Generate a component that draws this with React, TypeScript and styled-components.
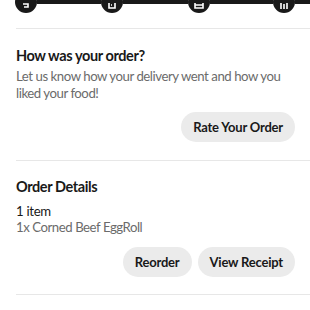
import styled, { createGlobalStyle } from 'styled-components'

const GlobalStyle = createGlobalStyle`
  body {
    margin: 0;
    background: #ffffff;
    font-family: Lato, 'Open Sans', sans-serif;
    color: #191919;
  }
`

const Page = styled.div`
  width: 310px;
  height: 310px;
  overflow: hidden;
  background: #ffffff;
`

const Tracker = styled.div`
  display: flex;
  align-items: center;
  margin-top: -9px;
  margin-bottom: 15px;
  padding-left: 15px;
  height: 22px;
`

const Step = styled.div`
  flex: none;
  width: 22px;
  height: 22px;
  border-radius: 50%;
  background: #191919;
  display: flex;
  align-items: flex-end;
  justify-content: center;
  padding-bottom: 4px;
  box-sizing: border-box;
`

const Track = styled.div<{ $w: number }>`
  flex: none;
  width: ${({ $w }) => $w}px;
  height: 4px;
  background: #191919;
`

const Section = styled.section<{ $top: number; $bottom: number }>`
  margin-left: 16px;
  padding: ${({ $top, $bottom }) => `${$top}px 15px ${$bottom}px 0`};
  border-top: 1px solid #e7e7e7;
  display: flex;
  flex-direction: column;
`

const Title = styled.h2`
  margin: 0;
  font-size: 14.5px;
  line-height: 20px;
  font-weight: 700;
  letter-spacing: -0.4px;
`

const Body = styled.p<{ $gap?: number; $lh?: number }>`
  margin: ${({ $gap = 0 }) => $gap}px 0 0;
  font-size: 13.2px;
  line-height: ${({ $lh = 17 }) => $lh}px;
  letter-spacing: -0.45px;
  color: #6b6b6b;
`

const ItemCount = styled.div`
  margin-top: 6px;
  font-size: 13.2px;
  line-height: 16px;
  letter-spacing: -0.3px;
  color: #191919;
`

const Actions = styled.div<{ $gap: number }>`
  margin-top: ${({ $gap }) => $gap}px;
  display: flex;
  justify-content: flex-end;
  gap: 6px;
`

const Pill = styled.button`
  height: 30px;
  padding: 0 12px;
  border: none;
  border-radius: 15px;
  background: #ebebeb;
  color: #191919;
  font-family: Lato, 'Open Sans', sans-serif;
  font-size: 13px;
  font-weight: 700;
  letter-spacing: -0.2px;
  cursor: pointer;
`

function StepIcon({ kind }: { kind: number }) {
  return (
    <svg width="10" height="6" viewBox="0 0 10 6" fill="none" stroke="#fff" strokeWidth="1.6">
      {kind === 0 && <path d="M2 1h5v3H3" />}
      {kind === 1 && <path d="M2 0v5h6V0M4 2h1" />}
      {kind === 2 && <path d="M1 0v5h8V0M1 2h8" />}
      {kind === 3 && <path d="M2 0v6M8 0v6M5 1v5" />}
    </svg>
  )
}

export default function App() {
  return (
    <Page>
      <GlobalStyle />
      <Tracker>
        <Step><StepIcon kind={0} /></Step>
        <Track $w={64} />
        <Step><StepIcon kind={1} /></Step>
        <Track $w={65} />
        <Step><StepIcon kind={2} /></Step>
        <Track $w={63} />
        <Step><StepIcon kind={3} /></Step>
        <Track $w={16} />
      </Tracker>
      <Section $top={17} $bottom={18}>
        <Title>How was your order?</Title>
        <Body $gap={2}>
          Let us know how your delivery went and how you liked your food!
        </Body>
        <Actions $gap={10}>
          <Pill>Rate Your Order</Pill>
        </Actions>
      </Section>
      <Section $top={16} $bottom={17}>
        <Title>Order Details</Title>
        <ItemCount>1 item</ItemCount>
        <Body $lh={16}>1x Corned Beef EggRoll</Body>
        <Actions $gap={12}>
          <Pill>Reorder</Pill>
          <Pill>View Receipt</Pill>
        </Actions>
      </Section>
      <Section $top={0} $bottom={0} />
    </Page>
  )
}
